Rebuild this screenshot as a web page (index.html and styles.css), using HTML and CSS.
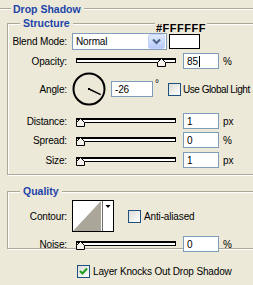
FILE: index.html
```html
<!DOCTYPE html>
<html lang="en">

<head>
    <meta charset="UTF-8">
    <meta name="viewport" content="width=device-width, initial-scale=1.0">
    <title>Drop Shadow</title>
    <link rel="stylesheet" href="styles.css">
</head>

<body>
    <div class="heading">
        <span class="rule short"></span>
        <span class="heading-text">Drop Shadow</span>
        <span class="rule"></span>
    </div>

    <fieldset class="group structure">
        <legend>Structure</legend>

        <div class="row blend">
            <label class="lbl">Blend Mode:</label>
            <div class="combo">
                <span class="combo-text">Normal</span>
                <span class="combo-btn">
                    <svg width="17" height="15" viewBox="0 0 17 15">
                        <defs>
                            <linearGradient id="cb" x1="0" y1="0" x2="0" y2="1">
                                <stop offset="0" stop-color="#E3ECFE" />
                                <stop offset="1" stop-color="#B4C9F6" />
                            </linearGradient>
                        </defs>
                        <rect x="0.5" y="0.5" width="16" height="14" rx="2" fill="url(#cb)" stroke="#C3D3FD" />
                        <polyline points="5,5.5 8.5,9 12,5.5" fill="none" stroke="#4D6185" stroke-width="2" />
                    </svg>
                </span>
            </div>
            <span class="swatch"><span class="hex">#FFFFFF</span></span>
        </div>

        <div class="row opacity">
            <label class="lbl">Opacity:</label>
            <div class="slider">
                <div class="track"></div>
                <svg class="thumb" style="left:85px" width="9" height="9" viewBox="0 0 9 9">
                    <polygon points="0.5,8.5 0.5,4.5 4.5,0.5 8.5,4.5 8.5,8.5" fill="#F4F2EA" stroke="#000" />
                </svg>
            </div>
            <div class="field">85<span class="caret"></span></div>
            <span class="unit">%</span>
        </div>

        <div class="row angle">
            <label class="lbl">Angle:</label>
            <svg class="dial" width="34" height="34" viewBox="0 0 34 34">
                <circle cx="17" cy="17" r="15.5" fill="none" stroke="#000" stroke-width="2" />
                <rect x="16" y="16" width="2" height="2" fill="#000" />
                <line x1="17" y1="17" x2="28.7" y2="22.7" stroke="#000" stroke-width="1.4" />
            </svg>
            <div class="field wide">-26</div>
            <span class="deg">°</span>
            <span class="check"></span>
            <span class="check-label tight">Use Global Light</span>
        </div>

        <div class="row distance">
            <label class="lbl">Distance:</label>
            <div class="slider">
                <div class="track"></div>
                <svg class="thumb" style="left:4px" width="9" height="9" viewBox="0 0 9 9">
                    <polygon points="0.5,8.5 0.5,4.5 4.5,0.5 8.5,4.5 8.5,8.5" fill="#F4F2EA" stroke="#000" />
                </svg>
            </div>
            <div class="field">1</div>
            <span class="unit">px</span>
        </div>

        <div class="row spread">
            <label class="lbl">Spread:</label>
            <div class="slider">
                <div class="track"></div>
                <svg class="thumb" style="left:4px" width="9" height="9" viewBox="0 0 9 9">
                    <polygon points="0.5,8.5 0.5,4.5 4.5,0.5 8.5,4.5 8.5,8.5" fill="#F4F2EA" stroke="#000" />
                </svg>
            </div>
            <div class="field">0</div>
            <span class="unit">%</span>
        </div>

        <div class="row size">
            <label class="lbl">Size:</label>
            <div class="slider">
                <div class="track"></div>
                <svg class="thumb" style="left:4px" width="9" height="9" viewBox="0 0 9 9">
                    <polygon points="0.5,8.5 0.5,4.5 4.5,0.5 8.5,4.5 8.5,8.5" fill="#F4F2EA" stroke="#000" />
                </svg>
            </div>
            <div class="field">1</div>
            <span class="unit">px</span>
        </div>
    </fieldset>

    <fieldset class="group quality">
        <legend>Quality</legend>

        <div class="row contour">
            <label class="lbl">Contour:</label>
            <svg class="curve" width="42" height="32" viewBox="0 0 42 32">
                <rect x="0.5" y="0.5" width="41" height="31" fill="#fff" stroke="#000" />
                <polygon points="1,31 29,1 29,31" fill="#AAA699" />
                <line x1="30.5" y1="1" x2="30.5" y2="31" stroke="#6E6D66" />
                <polygon points="33.5,5 38.5,5 36,8" fill="#000" />
            </svg>
            <span class="check"></span>
            <span class="check-label">Anti-aliased</span>
        </div>

        <div class="row noise">
            <label class="lbl">Noise:</label>
            <div class="slider">
                <div class="track"></div>
                <svg class="thumb" style="left:4px" width="9" height="9" viewBox="0 0 9 9">
                    <polygon points="0.5,8.5 0.5,4.5 4.5,0.5 8.5,4.5 8.5,8.5" fill="#F4F2EA" stroke="#000" />
                </svg>
            </div>
            <div class="field">0</div>
            <span class="unit">%</span>
        </div>
    </fieldset>

    <div class="row knock">
        <span class="check checked">
            <svg width="11" height="11" viewBox="0 0 11 11">
                <polyline points="2,5 4.5,7.5 9,2.5" fill="none" stroke="#21A121" stroke-width="2.2" />
            </svg>
        </span>
        <span class="check-label">Layer Knocks Out Drop Shadow</span>
    </div>
</body>

</html>
```

FILE: styles.css
```css
* {
    margin: 0;
    padding: 0;
    box-sizing: border-box;
}

html,
body {
    width: 253px;
    height: 285px;
    overflow: hidden;
}

body {
    background-color: #ECE9D8;
    font-family: "Liberation Sans", Arial, sans-serif;
    font-size: 10px;
    letter-spacing: -0.15px;
    color: #000;
}

/* top title with etched line */
.heading {
    display: flex;
    align-items: center;
    height: 12px;
    margin-top: 3px;
}

.rule {
    flex: 1;
    height: 2px;
    border-top: 1px solid #ACA899;
    border-bottom: 1px solid #fff;
}

.rule.short {
    flex: none;
    width: 11px;
}

.heading-text {
    padding: 0 3px 0 2px;
    font-weight: bold;
    font-size: 10.5px;
    letter-spacing: 0;
    color: #1D44A8;
}

/* group boxes */
.group {
    width: 270px;
    margin-left: 7px;
    border: 1px solid #ACA899;
    box-shadow: inset 1px 1px 0 #fff, 1px 1px 0 #fff;
}

.group legend {
    height: 11px;
    line-height: 11px;
    margin-left: 12px;
    padding: 0 3px;
    font-weight: bold;
    font-size: 10.5px;
    letter-spacing: 0;
    color: #1D44A8;
    background-color: #ECE9D8;
}

.structure {
    margin-top: 3px;
    padding: 4px 0 6px 0;
}

.quality {
    margin-top: 11px;
    padding: 3px 0 0 0;
}

.row {
    display: flex;
    align-items: center;
    height: 16px;
}

.lbl {
    width: 59px;
    margin-right: 5px;
    text-align: right;
}

/* blend mode */
.blend {
    height: 17px;
}

.combo {
    display: flex;
    align-items: center;
    justify-content: space-between;
    width: 95px;
    height: 17px;
    padding: 0 1px 0 3px;
    background-color: #fff;
    border: 1px solid #7F9DB9;
}

.combo-btn {
    display: flex;
}

.swatch {
    position: relative;
    width: 31px;
    height: 15px;
    margin-left: 2px;
    background-color: #fff;
    border: 1px solid #000;
}

.hex {
    position: absolute;
    left: -15px;
    top: -12px;
    padding: 0 1px;
    line-height: 10px;
    font-weight: bold;
    font-size: 11px;
    letter-spacing: 0.5px;
    background-color: #ECE9D8;
}

/* sliders */
.opacity {
    margin-top: 3px;
}

.slider {
    position: relative;
    width: 107px;
    height: 16px;
}

.track {
    height: 5px;
    margin: 5px 3px 0 4px;
    background-color: #fff;
    border: 1px solid #000;
    border-top-width: 2px;
}

.thumb {
    position: absolute;
    top: 5px;
}

.field {
    display: flex;
    align-items: center;
    width: 36px;
    height: 16px;
    margin-left: 4px;
    padding-left: 3px;
    background-color: #fff;
    border: 1px solid #7F9DB9;
}

.field.wide {
    width: 42px;
    margin-left: 5px;
}

.caret {
    width: 1px;
    height: 11px;
    margin-left: 1px;
    background-color: #000;
}

.unit {
    margin-left: 4px;
}

/* angle */
.angle {
    height: 34px;
    margin-top: 3px;
}

.deg {
    align-self: flex-start;
    width: 15px;
    margin-top: 8px;
    padding-left: 2px;
    line-height: 8px;
}

.check {
    display: flex;
    align-items: center;
    justify-content: center;
    flex: none;
    width: 13px;
    height: 13px;
    border: 1px solid #1C5180;
    background: linear-gradient(135deg, #DCDCD7, #fff);
}

.check-label {
    margin-left: 3px;
    white-space: nowrap;
}

.check-label.tight {
    margin-left: 2px;
    letter-spacing: -0.45px;
}

.distance {
    margin-top: 7px;
}

.spread {
    margin-top: 3px;
}

.size {
    margin-top: 4px;
}

/* quality */
.contour {
    height: 32px;
}

.contour .check {
    margin-left: 14px;
}

.noise {
    margin-top: 4px;
    margin-bottom: -4px;
}

.knock {
    height: 13px;
    margin: 16px 0 0 77px;
}
```
